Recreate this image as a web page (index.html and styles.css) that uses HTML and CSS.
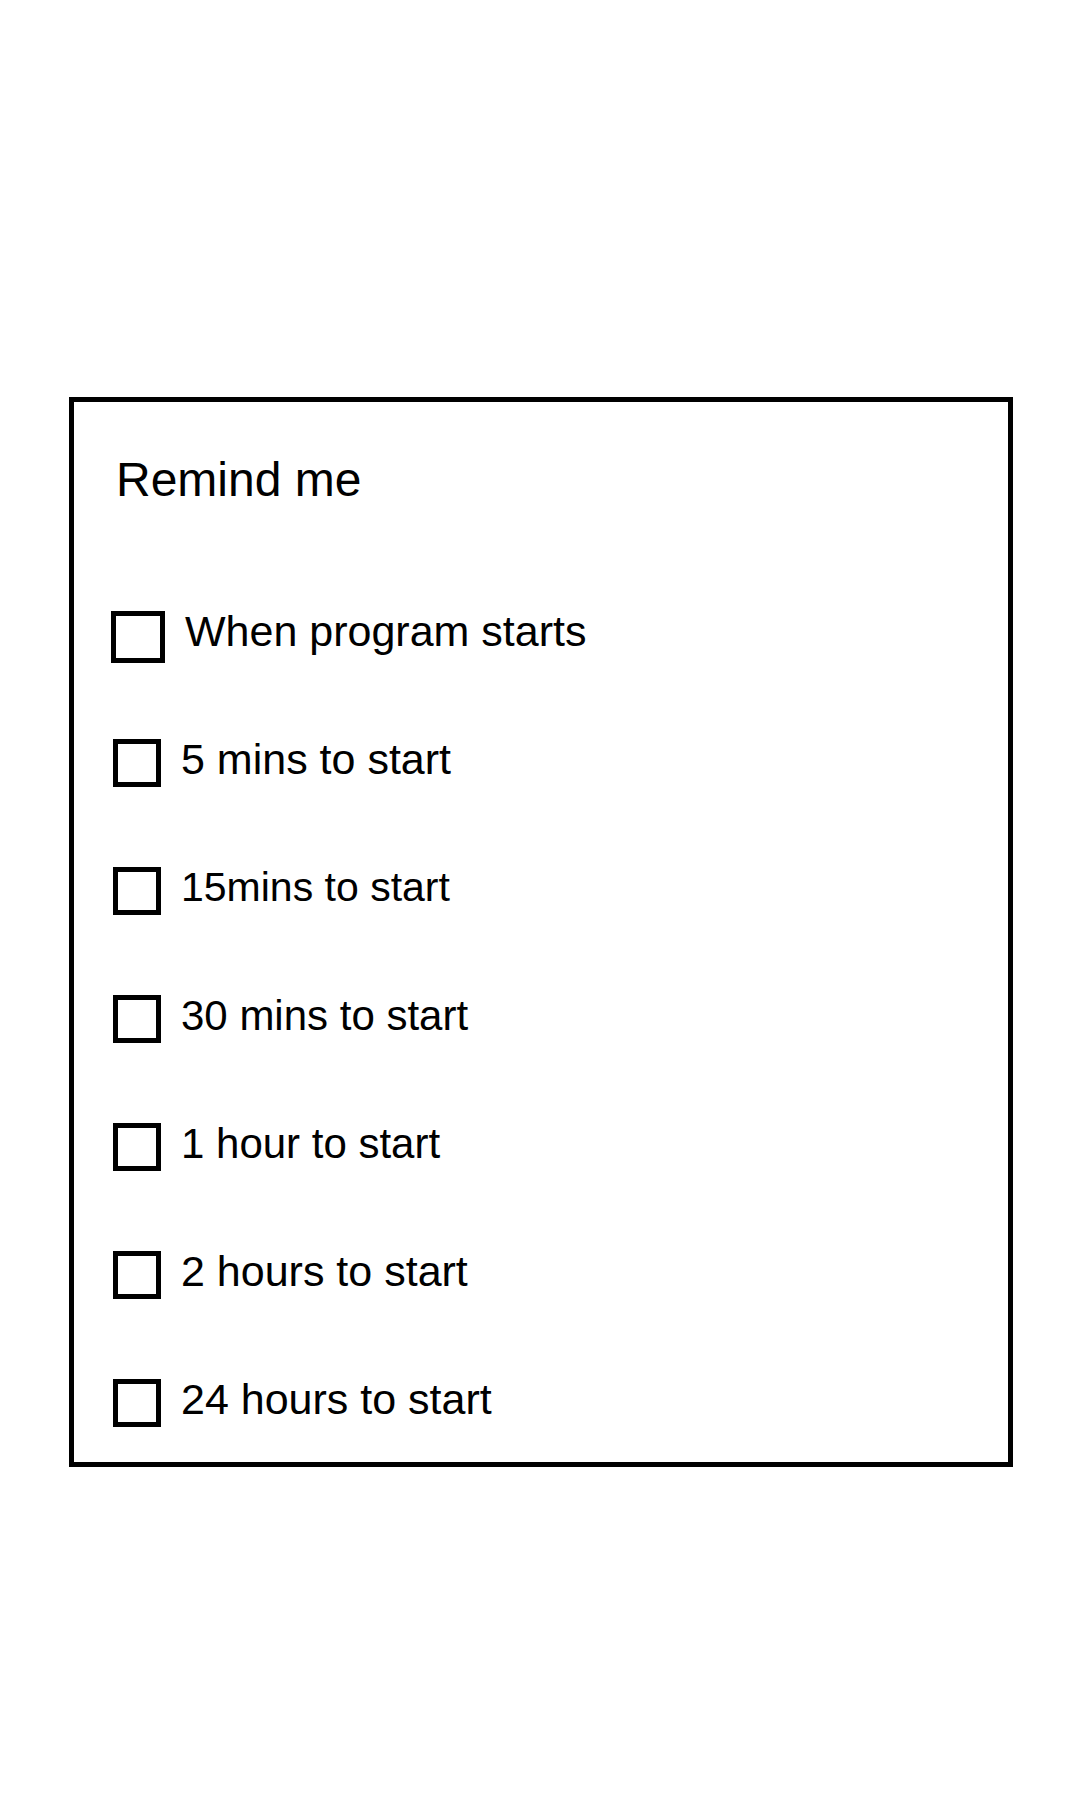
FILE: index.html
```html
<!DOCTYPE html>
<html>
<head>
<meta charset="utf-8">
<link rel="stylesheet" href="styles.css">
</head>
<body>
<div class="panel">
  <div class="title">Remind me</div>
  <ul class="options">
    <li class="option"><span class="box box-large"></span><span class="label">When program starts</span></li>
    <li class="option"><span class="box"></span><span class="label">5 mins to start</span></li>
    <li class="option"><span class="box"></span><span class="label label-sm">15mins to start</span></li>
    <li class="option"><span class="box"></span><span class="label label-md">30 mins to start</span></li>
    <li class="option"><span class="box"></span><span class="label label-md">1 hour to start</span></li>
    <li class="option"><span class="box"></span><span class="label">2 hours to start</span></li>
    <li class="option"><span class="box"></span><span class="label">24 hours to start</span></li>
  </ul>
</div>
</body>
</html>
```
FILE: styles.css
```css
html, body {
  margin: 0;
  padding: 0;
  background: #fff;
}
body {
  font-family: "Liberation Sans", Arial, sans-serif;
  color: #000;
  width: 1080px;
  height: 1800px;
}
.panel {
  box-sizing: border-box;
  margin: 397px 0 0 69px;
  width: 944px;
  height: 1070px;
  border: 5px solid #000;
  padding: 53px 0 0 39px;
}
.title {
  font-size: 48px;
  line-height: 49px;
  height: 49px;
  padding-left: 3px;
  white-space: nowrap;
}
.options {
  list-style: none;
  margin: 67px 0 0 0;
  padding: 0;
}
.option {
  height: 128px;
  display: flex;
  align-items: center;
  gap: 20px;
}
.box {
  box-sizing: border-box;
  width: 48px;
  height: 48px;
  border: 5px solid #000;
  flex: none;
}
.box-large {
  width: 54px;
  height: 52px;
  margin-left: -2px;
  margin-top: 4px;
}
.label {
  font-size: 43px;
  line-height: 43px;
  white-space: nowrap;
  margin-top: -8px;
}
.label-sm {
  font-size: 41px;
}
.label-md {
  font-size: 42px;
}
```
